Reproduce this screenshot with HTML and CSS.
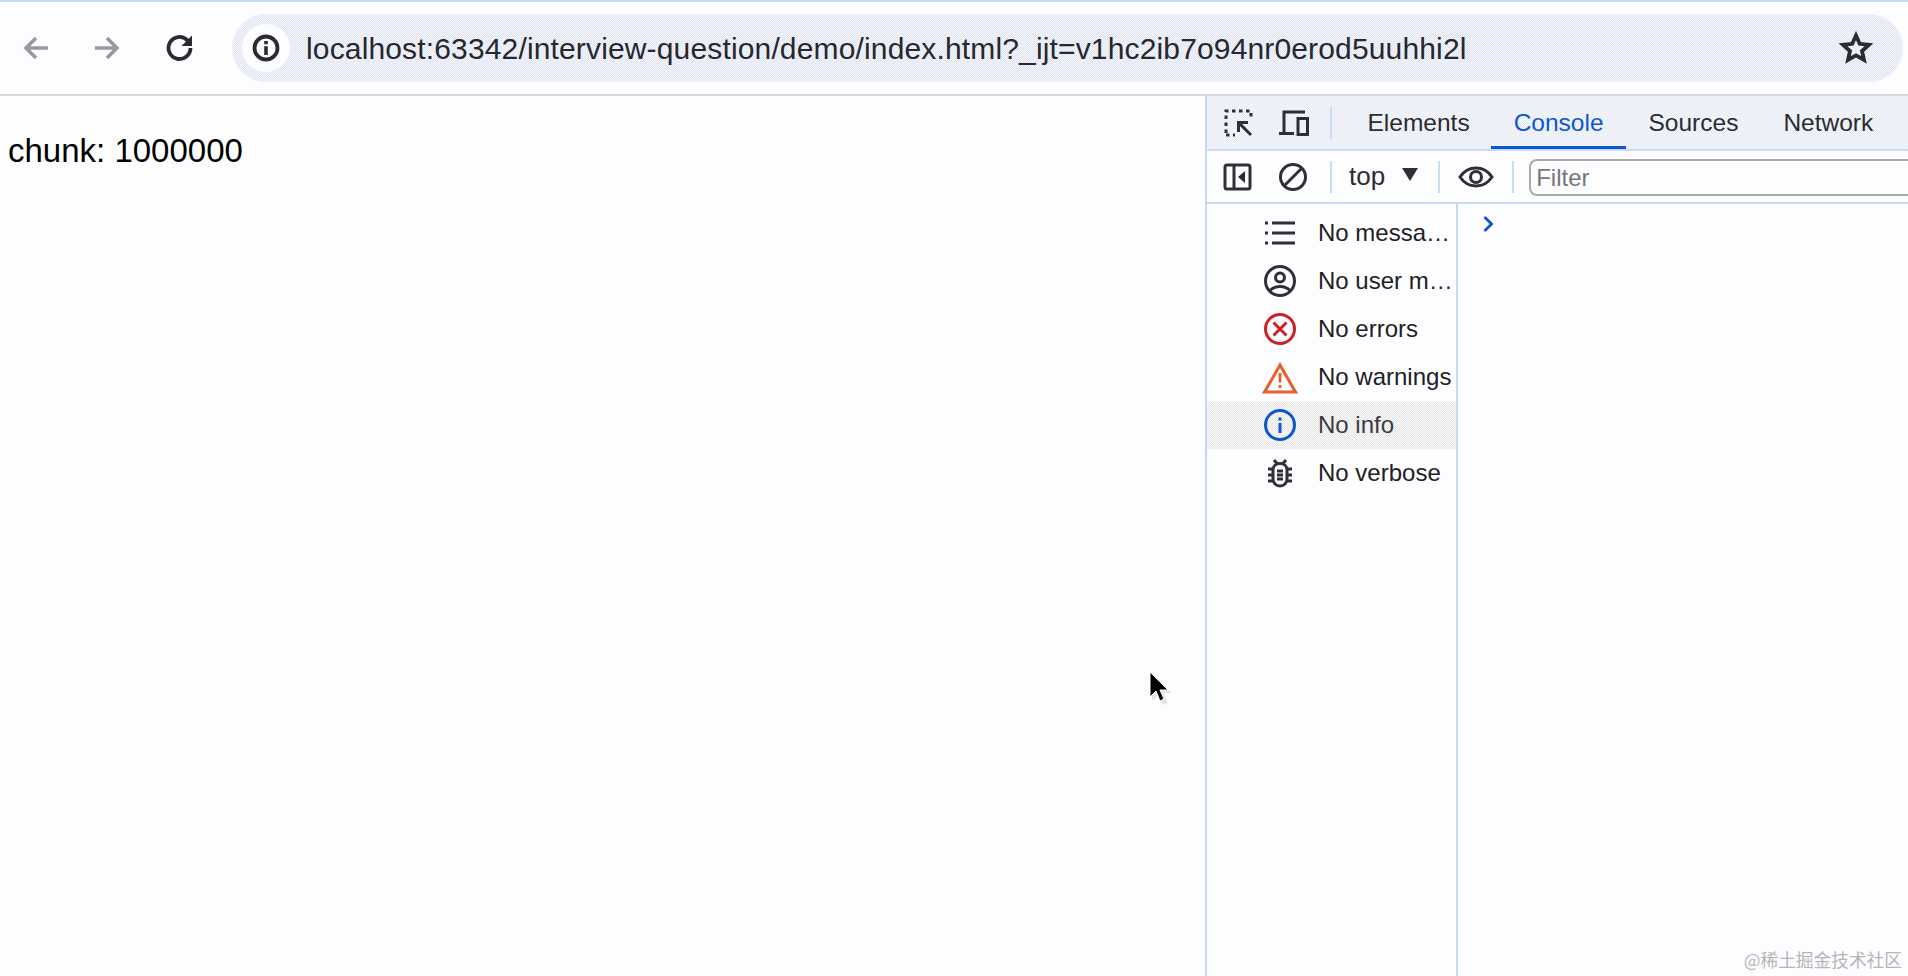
FILE: index.html
```html
<!DOCTYPE html>
<html lang="en">
<head>
<meta charset="utf-8">
<title>chunk</title>
<link rel="stylesheet" href="styles.css">
</head>
<body>
<header class="browser-bar">
  <div class="nav">
    <svg class="nav-icon" viewBox="0 0 30 30"><path class="muted" d="M27 15H5M15 5 5 15l10 10"/></svg>
    <svg class="nav-icon" viewBox="0 0 30 30"><path class="muted" d="M3 15h22M15 5l10 10-10 10"/></svg>
    <svg class="nav-icon reload" viewBox="0 0 30 30"><path class="heavy" d="M25.500 15a11 11 0 1 1-3.200-7.800L25 10"/><path class="fill" d="M27 2.500V13H16.500z"/></svg>
  </div>
  <div class="omnibox">
    <span class="site-chip"><svg viewBox="0 0 30 30" class="site-icon"><circle class="heavy" cx="15" cy="15" r="11.500"/><path class="fill" d="M13.200 8h3.600v3.200h-3.600zM13.200 13.200h3.600V22h-3.600z"/></svg></span>
    <span class="url">localhost:63342/interview-question/demo/index.html?_ijt=v1hc2ib7o94nr0erod5uuhhi2l</span>
    <svg class="star" viewBox="0 0 34 34"><path class="heavy" d="m17 4.500 3.700 8.300 9.300 1-7 6.200 2 9-8-4.600L9 29l2-9-7-6.200 9.300-1z"/></svg>
  </div>
</header>
<main class="viewport">
  <section class="page"><p class="chunk">chunk: 1000000</p></section>
  <section class="devtools">
    <div class="tabs">
      <div class="tool-icons">
        <svg class="tool" viewBox="0 0 30 30"><path class="dotted" d="M2 25V3h25v9"/><path class="dotted" d="M2 27h9"/><path class="dark" d="M27 27 15 15M14.500 24V14.500H24"/></svg>
        <svg class="tool" viewBox="0 0 30 30"><path class="dark" d="M5 24V4h21M0 25.500h15"/><rect class="dark" x="19" y="10.500" width="9.500" height="16"/></svg>
      </div>
      <span class="divider"></span>
      <span class="tab">Elements</span>
      <span class="tab active">Console</span>
      <span class="tab">Sources</span>
      <span class="tab">Network</span>
    </div>
    <div class="filter-row">
      <svg class="tool" viewBox="0 0 30 30"><rect class="dark" x="2" y="3" width="25" height="24" rx="2"/><path class="dark" d="M11 3v24"/><path class="fill" d="M22 9v12l-7-6z"/></svg>
      <svg class="tool block" viewBox="0 0 30 30"><circle class="dark" cx="15" cy="15" r="12.500"/><path class="dark" d="M6 24 24 6"/></svg>
      <span class="divider"></span>
      <span class="context">top</span>
      <span class="caret"></span>
      <span class="divider"></span>
      <svg class="eye" viewBox="0 0 36 30"><path class="dark" d="M2 15c4-6 9-9 16-9s12 3 16 9c-4 6-9 9-16 9S6 21 2 15z"/><circle class="dark" cx="18" cy="15" r="5.500"/></svg>
      <span class="divider"></span>
      <div class="filter">Filter</div>
    </div>
    <div class="console-body">
      <ul class="levels">
        <li class="level"><svg class="lv" viewBox="0 0 32 32"><path class="dark" d="M8 6h23M8 16h23M8 26h23"/><path class="dark" d="M1 6h3M1 16h3M1 26h3"/></svg><span class="label">No messa…</span></li>
        <li class="level"><svg class="lv" viewBox="0 0 32 32"><circle class="dark" cx="16" cy="16" r="14.500"/><circle class="dark" cx="16" cy="12.500" r="4.500"/><path class="dark" d="M6 25.500c5-5.500 15-5.500 20 0"/></svg><span class="label">No user m…</span></li>
        <li class="level"><svg class="lv" viewBox="0 0 32 32"><circle class="red" cx="16" cy="16" r="14.500"/><path class="red" d="m9.500 9.500 13 13M22.500 9.500l-13 13"/></svg><span class="label">No errors</span></li>
        <li class="level"><svg class="lv warn" viewBox="0 0 36 32"><path class="orange" d="M18 3 33.500 30h-31z"/><path class="orange-fill" d="M16.600 11h2.800v9.500h-2.800zM16.600 23h2.800v3h-2.800z"/></svg><span class="label">No warnings</span></li>
        <li class="level selected"><svg class="lv" viewBox="0 0 32 32"><circle class="blue" cx="16" cy="16" r="14.500"/><path class="blue-fill" d="M14.500 8.500h3v3h-3zM14.500 14h3v10h-3z"/></svg><span class="label">No info</span></li>
        <li class="level"><svg class="lv" viewBox="0 0 32 32"><path class="dark" d="M10 3l3.500 4M22 3l-3.500 4M4 12h5M4 18h5M4 24h5M23 12h5M23 18h5M23 24h5"/><path class="dark" d="M9 13c0-4 3-6.500 7-6.500s7 2.500 7 6.500v9c0 4-3 7-7 7s-7-3-7-7z"/><path class="dark" d="M13 14h6M13 18h6M13 22h6"/></svg><span class="label">No verbose</span></li>
      </ul>
      <div class="console-output">
        <svg class="prompt" viewBox="0 0 12 18"><path d="m2.500 2 7 7-7 7"/></svg>
      </div>
    </div>
  </section>
</main>
<svg class="cursor" viewBox="0 0 24 38"><path class="cursor-shadow" d="M3 3v27l6.500-6 4 10 5-2-4-10h8.500z"/><path class="cursor-arrow" d="M1 1v25l6-6 4 10 4-2-4-9h8z"/></svg>
<span class="watermark">@稀土掘金技术社区</span>
</body>
</html>
```
FILE: styles.css
```css
* { box-sizing: border-box; }
html, body { height: 100%; }
body {
  margin: 0;
  height: 976px;
  overflow: hidden;
  position: relative;
  background: #fdfdff;
  color: #000;
  font-family: "Liberation Sans", Arial, sans-serif;
  display: flex;
  flex-direction: column;
  border-top: 2px solid #c6d8f8;
}
svg { display: block; flex: none; fill: none; }
.dark { stroke: #2e3033; stroke-width: 3; fill: none; }
.heavy { stroke: #2a2c2f; stroke-width: 3.800; fill: none; }
.fill { fill: #2a2c2f; stroke: none; }
.muted { stroke: #97999d; stroke-width: 3.500; fill: none; }
.browser-bar {
  height: 94px;
  flex: none;
  display: flex;
  align-items: center;
  border-bottom: 2px solid #d6d7d9;
  background: #fdfdff;
}
.nav { display: flex; gap: 41px; padding-left: 21px; width: 232px; margin-top: -1px; }
.nav-icon { width: 30px; height: 30px; }
.reload { margin-left: 2px; }
.omnibox {
  width: 1671px;
  height: 68px;
  border-radius: 34px;
  background: repeating-conic-gradient(#dfe5f2 0 25%, #f3f5fb 0 50%) 0 0 / 2px 2px;
  display: flex;
  align-items: center;
  padding-left: 10px;
  padding-right: 30px;
}
.site-chip {
  width: 48px;
  height: 48px;
  border-radius: 50%;
  background: #fdfdff;
  display: flex;
  align-items: center;
  justify-content: center;
  flex: none;
}
.site-icon { width: 30px; height: 30px; }
.url {
  margin-left: 16px;
  margin-top: 2px;
  flex: 1;
  font-size: 30px;
  color: #26282b;
  white-space: nowrap;
  letter-spacing: 0.15px;
}
.star { width: 34px; height: 34px; }
.viewport { flex: 1; display: flex; min-height: 0; }
.page { width: 1205px; flex: none; }
.chunk { margin: 0; padding: 36px 0 0 8px; font-size: 33px; line-height: 38px; }
.devtools {
  flex: 1;
  display: flex;
  flex-direction: column;
  border-left: 2px solid #c4d7f7;
  min-width: 0;
}
.tabs {
  height: 55px;
  flex: none;
  background: repeating-conic-gradient(#e5e9f3 0 25%, #f7f8fc 0 50%) 0 0 / 2px 2px;
  border-bottom: 2px solid #c9dbf8;
  display: flex;
  align-items: center;
  padding-left: 17px;
  color: #2a2c30;
  font-size: 24.500px;
}
.tool-icons { display: flex; gap: 25px; margin-right: 21px; }
.tool { width: 30px; height: 30px; }
.dotted { stroke: #2e3033; stroke-width: 3; stroke-dasharray: 3.500 3.500; fill: none; }
.divider { width: 2px; height: 32px; background: #c9dbf8; flex: none; }
.tab {
  height: 53px;
  display: flex;
  align-items: center;
  padding: 3px 22.500px 0;
  border-bottom: 3px solid transparent;
}
.tabs .divider + .tab { margin-left: 13px; }
.tab.active { color: #0b57d0; border-bottom-color: #0b57d0; margin-left: -1px; }
.filter-row {
  height: 53px;
  flex: none;
  display: flex;
  align-items: center;
  padding-left: 16px;
  border-bottom: 2px solid #c9dbf8;
  background: #fdfdff;
  font-size: 24px;
  color: #2a2c30;
}
.block { margin: 0 22px 0 25px; }
.context { margin-left: 17px; font-size: 26px; }
.caret {
  width: 0;
  height: 0;
  border-left: 8.500px solid transparent;
  border-right: 8.500px solid transparent;
  border-top: 13px solid #2e3033;
  margin: -4px 20px 0 17px;
}
.eye { width: 36px; height: 30px; margin: 0 18px 0 18px; }
.filter {
  flex: 1;
  height: 37px;
  margin-left: 15px;
  margin-top: 1px;
  border: 2px solid #ababab;
  border-right: 0;
  border-radius: 8px 0 0 8px;
  padding-left: 5px;
  line-height: 34px;
  color: #75777b;
}
.console-body { flex: 1; display: flex; min-height: 0; }
.levels {
  width: 251px;
  flex: none;
  margin: 0;
  padding: 5px 0 0;
  list-style: none;
  border-right: 2px solid #c4d7f7;
}
.level { height: 48px; display: flex; align-items: center; padding-left: 57px; font-size: 24px; color: #1f2124; white-space: nowrap; }
.lv { width: 32px; height: 32px; margin-right: 22px; }
.warn { width: 36px; margin: 2px 20px 0 -2px; }
.label { display: block; }
.selected { background: repeating-conic-gradient(#e6e6e8 0 25%, #f9f9fa 0 50%) 0 0 / 2px 2px; color: #3a3c40; }
.red { stroke: #cc2026; stroke-width: 3; fill: none; }
.orange { stroke: #e0622a; stroke-width: 3; fill: none; }
.orange-fill { fill: #e0622a; }
.blue { stroke: #0b57d0; stroke-width: 3; fill: none; }
.blue-fill { fill: #0b57d0; }
.console-output { flex: 1; padding: 11px 0 0 24px; }
.prompt { width: 12px; height: 18px; }
.prompt path { stroke: #0b57d0; stroke-width: 2.800; fill: none; }
.cursor { position: absolute; left: 1149px; top: 669px; width: 24px; height: 38px; }
.cursor-shadow { fill: #d9d9dc; opacity: .7; }
.cursor-arrow { fill: #000; stroke: #fff; stroke-width: 1; }
.watermark {
  position: absolute;
  right: 6px;
  bottom: 7px;
  font-family: "Noto Sans CJK SC", "Liberation Serif", serif;
  font-size: 17.700px;
  line-height: 20px;
  color: #b4b5b7;
}
```
